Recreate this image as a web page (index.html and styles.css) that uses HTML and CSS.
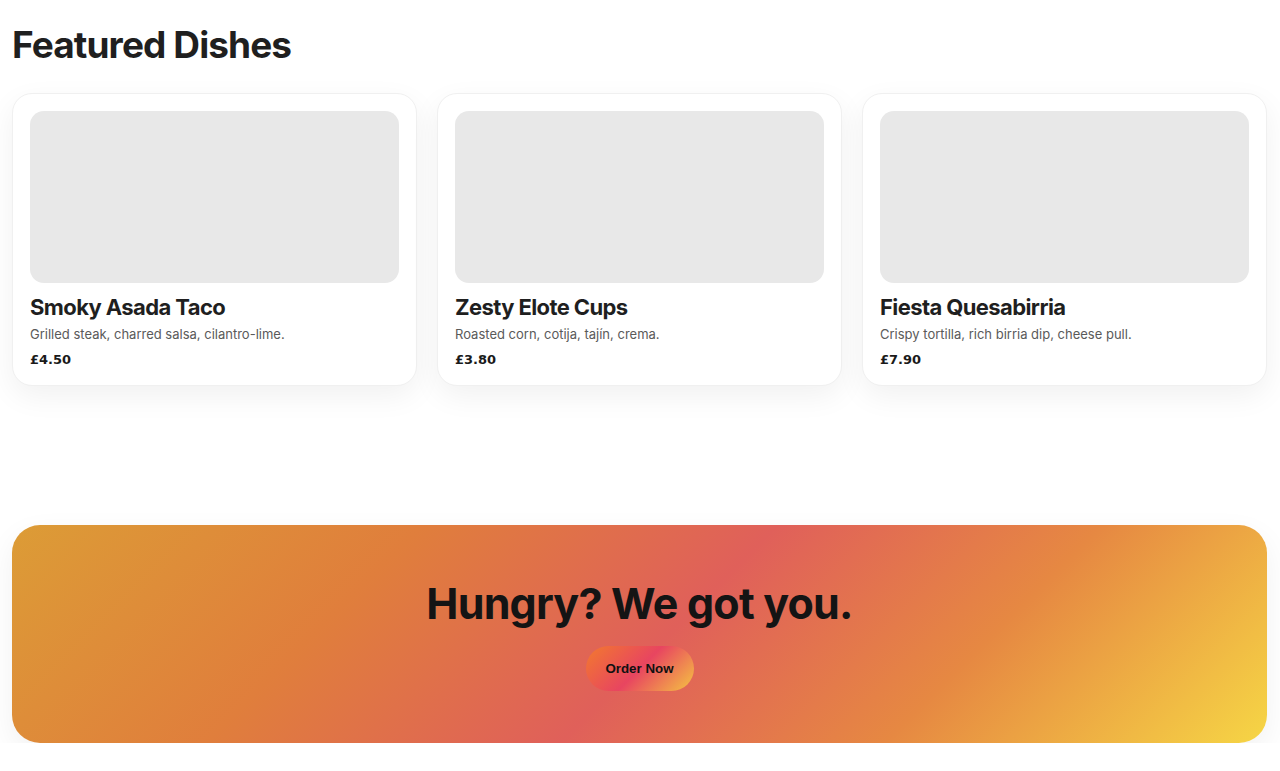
FILE: index.html
```html
<!DOCTYPE html>
<html lang="en">
<head>
<meta charset="utf-8">
<title>Featured Dishes</title>
<link rel="stylesheet" href="styles.css">
</head>
<body>
<main class="page">
  <section class="featured">
    <h2 class="section-title">Featured Dishes</h2>
    <div class="grid">
      <article class="card">
        <div class="thumb"></div>
        <h3 class="dish-name">Smoky Asada Taco</h3>
        <p class="dish-desc">Grilled steak, charred salsa, cilantro-lime.</p>
        <p class="price">£4.50</p>
      </article>
      <article class="card">
        <div class="thumb"></div>
        <h3 class="dish-name">Zesty Elote Cups</h3>
        <p class="dish-desc">Roasted corn, cotija, tajín, crema.</p>
        <p class="price">£3.80</p>
      </article>
      <article class="card">
        <div class="thumb"></div>
        <h3 class="dish-name">Fiesta Quesabirria</h3>
        <p class="dish-desc">Crispy tortilla, rich birria dip, cheese pull.</p>
        <p class="price">£7.90</p>
      </article>
    </div>
  </section>
  <section class="cta">
    <h2 class="cta-title">Hungry? We got you.</h2>
    <button class="cta-btn" type="button">Order Now</button>
  </section>
</main>
</body>
</html>
```

FILE: styles.css
```css
* { box-sizing: border-box; }
html, body { margin: 0; padding: 0; background: #ffffff; }
body {
  font-family: Inter, "Noto Sans", sans-serif;
  color: #1e1e1e;
}
.page {
  padding: 0 13px 0 12px;
}
.featured {
  padding-top: 22px;
}
.section-title {
  margin: 0 0 25px 0;
  font-size: 37px;
  line-height: 46px;
  font-weight: 700;
  letter-spacing: -0.9px;
  color: #1f1f1f;
}
.grid {
  display: grid;
  grid-template-columns: repeat(3, 1fr);
  gap: 20px;
}
.card {
  background: #fff;
  border: 1px solid #f0f0f0;
  border-radius: 20px;
  padding: 17px 17px 15px 17px;
  box-shadow: 0 10px 30px rgba(0, 0, 0, 0.06);
}
.thumb {
  height: 172px;
  background: #e8e8e8;
  border-radius: 14px;
}
.dish-name {
  margin: 10px 0 0 0;
  font-size: 22px;
  line-height: 28px;
  font-weight: 700;
  letter-spacing: -0.6px;
  color: #1f1f1f;
}
.dish-desc {
  margin: 4px 0 0 0;
  font-size: 13px;
  line-height: 18px;
  color: #5a5a5a;
}
.price {
  margin: 7px 0 0 0;
  font-family: "DejaVu Sans", sans-serif;
  font-size: 13px;
  line-height: 20px;
  font-weight: 700;
  color: #1a1a1a;
}
.cta {
  margin-top: 139px;
  height: 218px;
  border-radius: 28px;
  background: linear-gradient(135deg, #dc9c36 0%, #e07e3c 28%, #e0605a 52%, #e68842 74%, #f6d645 100%);
  box-shadow: 0 10px 30px rgba(0, 0, 0, 0.06);
  display: flex;
  flex-direction: column;
  align-items: center;
  padding-top: 49px;
}
.cta-title {
  margin: 0;
  font-size: 43px;
  line-height: 58px;
  font-weight: 700;
  letter-spacing: -0.8px;
  color: #141414;
}
.cta-btn {
  margin-top: 14px;
  width: 108px;
  height: 45px;
  border: none;
  border-radius: 23px;
  background: linear-gradient(135deg, #f27a2e 0%, #e84560 50%, #f5c442 100%);
  font-family: "Liberation Sans", Arial, sans-serif;
  font-size: 13.333px;
  font-weight: 700;
  color: #111;
  cursor: pointer;
}
```
